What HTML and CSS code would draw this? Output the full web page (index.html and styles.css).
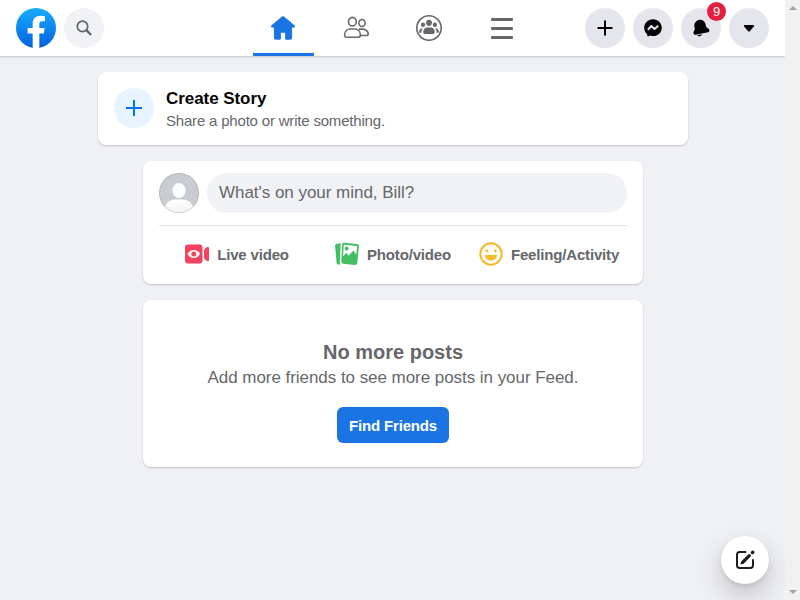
FILE: index.html
```html
<!DOCTYPE html>
<html lang="en">
<head>
<meta charset="utf-8">
<title>Facebook</title>
<link rel="stylesheet" href="styles.css">
</head>
<body>
<div class="page">
  <header class="topbar">
    <a class="logo" href="#" aria-label="Facebook">
      <svg width="40" height="40" viewBox="0 0 36 36">
        <defs><linearGradient id="logoFill" x1="0" y1="0" x2="0" y2="1"><stop offset="0" stop-color="#18acfe"/><stop offset="1" stop-color="#0062e0"/></linearGradient></defs>
        <circle cx="18" cy="18" r="18" fill="url(#logoFill)"/>
        <path fill="#fff" d="M25 23l.8-5H21v-3.500c0-1.400.5-2.500 2.700-2.500H26V7.400c-1.300-.2-2.700-.4-4-.4-4.100 0-7 2.500-7 7v4h-4.500v5H15v12.700c1 .2 2 .3 3 .3s2-.1 3-.3V23h4z"/>
      </svg>
    </a>
    <button class="round search" aria-label="Search">
      <svg width="40" height="40" viewBox="0 0 40 40" fill="none" stroke="#606267" stroke-linecap="round"><circle cx="18.500" cy="18.400" r="5.200" stroke-width="1.700"/><path d="M22.600 22.400l3.900 3.800" stroke-width="2.300"/></svg>
    </button>
    <nav class="tabs">
      <a class="tab active" href="#" aria-label="Home">
        <svg width="29" height="28" viewBox="0 0 29 28"><path fill="#1b74e4" stroke="#1b74e4" stroke-width="1" stroke-linejoin="round" d="M12.800 3.200Q14 2.100 15.200 3.200L25.400 11.700Q26.400 13.100 25 13.100H22.600V24Q22.600 25.200 21.400 25.200H16.700V19Q16.700 18.200 15.900 18.200H12.100Q11.300 18.200 11.300 19V25.200H6.600Q5.400 25.200 5.400 24V13.100H3Q1.600 13.100 2.600 11.700Z"/></svg>
      </a>
      <a class="tab" href="#" aria-label="Friends">
        <svg width="29" height="28" viewBox="0 0 29 28" fill="none" stroke="#65676b" stroke-width="1.600"><ellipse cx="10.400" cy="7.700" rx="3.900" ry="4.300"/><ellipse cx="20" cy="9" rx="3.100" ry="3.500"/><path d="M8.500 15h4c3.600 0 5.900 2.500 5.900 6 0 1.700-.7 2.200-2.200 2.200H4.800c-1.500 0-2.200-.5-2.200-2.200 0-3.500 2.300-6 5.900-6z"/><path d="M16.800 15.100h3.700c3.500 0 5.700 2.300 5.700 4.600 0 1.300-.6 1.800-2 1.800h-5.400"/></svg>
      </a>
      <a class="tab" href="#" aria-label="Groups">
        <svg width="29" height="28" viewBox="0 0 29 28" fill="#65676b"><circle cx="14" cy="14" r="12.200" fill="none" stroke="#65676b" stroke-width="1.600"/><ellipse cx="14" cy="8.800" rx="2.900" ry="3.100"/><ellipse cx="8.100" cy="10.800" rx="2.100" ry="2.300"/><ellipse cx="19.900" cy="10.800" rx="2.100" ry="2.300"/><path d="M12.500 13.500h3c2.600 0 4.300 1.900 4.300 4.600 0 1.200-.6 1.800-1.700 1.800H9.900c-1.100 0-1.700-.6-1.700-1.800 0-2.700 1.700-4.600 4.300-4.600z"/><path d="M8 14.300c-1.300 1.400-1.700 3-1.600 4.500H5c-.7 0-.9-.5-.9-1 0-2 1.700-3.700 3.900-3.500zM20 14.300c1.300 1.400 1.700 3 1.600 4.500H23c.7 0 .9-.5.9-1 0-2-1.700-3.700-3.900-3.500z"/></svg>
      </a>
      <a class="tab" href="#" aria-label="More">
        <svg width="29" height="28" viewBox="0 0 29 28" fill="#65676b"><rect x="3" y="4" width="22" height="3" rx="1"/><rect x="3" y="13" width="22" height="3" rx="1"/><rect x="3" y="22" width="22" height="3" rx="1"/></svg>
      </a>
    </nav>
    <div class="tools">
      <button class="round" aria-label="Create"><svg width="40" height="40" viewBox="0 0 40 40" fill="none" stroke="#000" stroke-width="2" stroke-linecap="round"><path d="M20 13.300v13.400M13.300 20h13.400"/></svg></button>
      <button class="round" aria-label="Messenger"><svg width="40" height="40" viewBox="0 0 40 40"><path fill="#050505" d="M20 11.200c-5 0-8.800 3.600-8.800 8.500 0 2.500 1 4.700 2.800 6.200.3.300.3.800.3 1.600 0 .7.600 1.100 1.200.8l1.700-.8c.9.400 1.800.5 2.800.5 5 0 8.800-3.600 8.800-8.300s-3.800-8.500-8.800-8.500z"/><path fill="none" stroke="#e4e6eb" stroke-width="2" stroke-linejoin="round" d="M14.900 21.800l3.400-3.800 3.200 2.900 3.700-3.200"/></svg></button>
      <button class="round" aria-label="Notifications"><svg width="40" height="40" viewBox="0 0 40 40"><g fill="#050505" transform="rotate(-11 20 20)"><path d="M19.700 11.700c-3.300 0-5.800 2.400-5.900 5.600v2c0 1-.7 1.700-1.500 2.600-1.200 1.400-.9 3.700 1 3.700h12.800c1.900 0 2.200-2.300 1-3.700-.9-1-1.900-1.600-1.900-2.700v-1.900c-.1-3.200-2.200-5.600-5.500-5.600z"/><path d="M14.600 26.300h5c-.2 1-1.100 1.500-2.200 1.500s-2.300-.5-2.800-1.500z"/></g></svg><span class="badge">9</span></button>
      <button class="round" aria-label="Account"><svg width="40" height="40" viewBox="0 0 40 40"><path fill="#050505" d="M15.600 17h8.800c.7 0 1 .8.500 1.400l-4.100 4.900c-.5.500-1.100.5-1.600 0l-4.100-4.900c-.5-.6-.2-1.400.5-1.400z"/></svg></button>
    </div>
  </header>
  <main class="feed">
    <section class="card story">
      <span class="story-icon"><svg width="40" height="40" viewBox="0 0 40 40" fill="none" stroke="#0571ed" stroke-width="2"><path d="M20 12v16M12 20h16"/></svg></span>
      <div>
        <h2 class="story-title">Create Story</h2>
        <p class="story-text">Share a photo or write something.</p>
      </div>
    </section>
    <section class="card composer">
      <div class="prompt">
        <svg class="avatar" width="40" height="40" viewBox="0 0 40 40">
          <defs><clipPath id="face"><circle cx="20" cy="20" r="20"/></clipPath><linearGradient id="shirt" x1="0" y1="0" x2="0" y2="1"><stop offset="0" stop-color="#fff"/><stop offset="1" stop-color="#f2f2f4"/></linearGradient></defs>
          <g clip-path="url(#face)"><path fill="#c9ccd1" d="M0 0h40v40H0z"/><ellipse cx="20" cy="17.500" rx="6.600" ry="7.500" fill="#fff"/><path fill="url(#shirt)" d="M5 40c0-8 4-13 11-13.400h8c7 .4 11 5.400 11 13.400z"/></g>
          <circle cx="20" cy="20" r="19.500" fill="none" stroke="#000" stroke-opacity=".11"/>
        </svg>
        <div class="input">What's on your mind, Bill?</div>
      </div>
      <div class="actions">
        <div class="action"><svg width="24" height="24" viewBox="0 0 24 24"><rect y="2.500" width="17.500" height="19" rx="3" fill="#f3425f"/><path fill="#f3425f" d="M19 9c0-2 1.500-3.500 3.500-4 1-.2 1.500.2 1.500 1v12c0 .8-.5 1.200-1.500 1-2-.5-3.500-2-3.500-4z"/><path fill="#fff" d="M2.500 12C4 9.200 6.200 7.900 8.800 7.900s4.800 1.300 6.300 4.100c-1.500 2.800-3.700 4.100-6.300 4.100S4 14.800 2.500 12z"/><circle cx="8.800" cy="12" r="2.500" fill="#f3425f"/></svg>Live video</div>
        <div class="action"><svg width="24" height="24" viewBox="0 0 24 24"><path fill="#45bd62" d="M5.700 1.300L2 1.700C.7 1.900 0 2.700.1 4l1.500 16.700c.2 1.500 1.200 2.100 2.500 1.900l1.300-.2c-.5-.6-.7-1.300-.6-2.200z"/><path fill="#45bd62" fill-rule="evenodd" d="M9.400.8l12.300 1.300c1.500.2 2.300 1.100 2.200 2.500L22.300 20.800c-.2 1.500-1.100 2.300-2.500 2.200L8.400 21.800c-1.500-.2-2.200-1.100-2.100-2.500L7.100 2.900C7.200 1.300 8 .7 9.400.8zM9.500 2.700c-.5 0-.8.2-.8.7l-.6 10.800 2.300-2.500c.5-.5 1.100-.5 1.600.1l1.600 1.900 3.800-4.300c.6-.6 1.200-.6 1.700.1l2.200 3.100.8-7.500c0-.6-.2-.9-.8-1z"/><circle cx="11.700" cy="6.500" r="1.900" fill="#45bd62"/></svg>Photo/video</div>
        <div class="action"><svg width="24" height="24" viewBox="0 0 24 24"><circle cx="12" cy="12" r="10.700" fill="none" stroke="#f7b928" stroke-width="2"/><circle cx="7.700" cy="8.900" r="1.400" fill="#f7b928"/><circle cx="16.300" cy="8.900" r="1.400" fill="#f7b928"/><path fill="#f7b928" d="M6.900 13h10.200c.7 0 1 .5.900 1.100-.5 2.700-3 4.500-6 4.500s-5.500-1.800-6-4.500c-.1-.6.2-1.100.9-1.100z"/></svg>Feeling/Activity</div>
      </div>
    </section>
    <section class="card empty">
      <h2 class="empty-title">No more posts</h2>
      <p class="empty-text">Add more friends to see more posts in your Feed.</p>
      <button class="primary">Find Friends</button>
    </section>
  </main>
  <button class="compose" aria-label="New message"><svg width="24" height="24" viewBox="0 0 24 24" fill="none" stroke="#1c1e21" stroke-linecap="round"><path stroke-width="2" d="M12.500 4H6.800Q4 4 4 6.800v10.400Q4 20 6.800 20h10.400q2.800 0 2.800-2.800V12"/><path stroke-width="3.200" d="M10 14l6.300-6.300"/><path stroke-width="3.400" d="M19.400 4.600l.4-.4"/><path fill="#1c1e21" stroke="none" d="M8.400 13l2.600 2.600-3.400 1c-.2 0-.3-.1-.2-.3z"/></svg></button>
</div>
<div class="scrollbar"><span class="arrow-up"></span><span class="arrow-down"></span></div>
</body>
</html>
```

FILE: styles.css
```css
* { box-sizing: border-box; }
html, body { margin: 0; height: 100%; overflow: hidden; }
body {
  display: flex;
  background: #f0f2f5;
  color: #65676b;
  font-family: "Liberation Sans", Arial, sans-serif;
}
h2, p { margin: 0; }
button { font: inherit; border: 0; padding: 0; }
svg { display: block; flex: none; }
.page { position: relative; flex: 1; height: 600px; background: #f0f1f5; }

.topbar {
  display: flex;
  align-items: center;
  height: 56px;
  padding: 0 16px;
  background: #fff;
  box-shadow: 0 1px 2px rgba(0, 0, 0, .18);
}
.round {
  position: relative;
  width: 40px;
  height: 40px;
  border-radius: 50%;
  background: #e4e6eb;
}
.search { margin-left: 8px; background: #f0f2f5; }
.tabs { display: flex; gap: 12px; margin-left: 149px; }
.tab {
  display: flex;
  justify-content: center;
  align-items: center;
  width: 61px;
  height: 56px;
}
.tab.active { box-shadow: inset 0 -3px #1b74e4; border-radius: 1px; }
.tools { display: flex; gap: 8px; margin-left: auto; }
.badge {
  position: absolute;
  top: -6px;
  right: -5px;
  width: 19px;
  height: 19px;
  border-radius: 50%;
  background: #e41e3f;
  color: #fff;
  font-size: 13px;
  line-height: 19px;
  text-align: center;
}

.feed {
  display: flex;
  flex-direction: column;
  align-items: center;
  gap: 16px;
  padding: 16px 0 0 1px;
}
.card {
  width: 500px;
  border-radius: 8px;
  background: #fff;
  box-shadow: 0 1px 2px rgba(0, 0, 0, .2);
}
.story { display: flex; gap: 12px; width: 590px; height: 73px; padding: 16px; }
.story-icon { width: 40px; height: 40px; border-radius: 50%; background: #e7f3ff; }
.story-title { padding-top: 1px; font-size: 17px; line-height: 20px; letter-spacing: -.06px; color: #050505; }
.story-text { margin-top: 2px; font-size: 15px; line-height: 20px; letter-spacing: -.19px; }

.composer { height: 123px; padding: 12px 16px; }
.prompt { display: flex; gap: 8px; padding-bottom: 12px; border-bottom: 1px solid #e2e4e8; }
.input {
  flex: 1;
  height: 40px;
  padding-left: 12px;
  border-radius: 20px;
  background: #f0f2f5;
  font-size: 17px;
  line-height: 39px;
  letter-spacing: -.03px;
}
.actions { display: grid; grid-template-columns: repeat(3, 1fr); padding-top: 8px; }
.action {
  display: flex;
  align-items: center;
  justify-content: center;
  gap: 8px;
  height: 40px;
  font-size: 15px;
  font-weight: bold;
  letter-spacing: -.17px;
}

.empty {
  display: flex;
  flex-direction: column;
  align-items: center;
  height: 167px;
  padding-top: 40px;
}
.empty-title { font-size: 20px; line-height: 24px; }
.empty-text { margin-top: 4px; font-size: 17px; line-height: 20px; letter-spacing: -.05px; }
.primary {
  width: 112px;
  height: 36px;
  margin-top: 19px;
  border-radius: 6px;
  background: #1b74e4;
  color: #fff;
  font-size: 15px;
  font-weight: bold;
  letter-spacing: -.17px;
}

.compose {
  position: absolute;
  right: 16px;
  bottom: 16px;
  display: flex;
  align-items: center;
  justify-content: center;
  width: 48px;
  height: 48px;
  border-radius: 50%;
  background: #fff;
  box-shadow: 0 2px 4px rgba(0, 0, 0, .1), 0 12px 28px rgba(0, 0, 0, .2);
}

.scrollbar {
  z-index: 1;
  display: flex;
  flex-direction: column;
  justify-content: space-between;
  align-items: center;
  width: 15px;
  padding: 6px 0;
  background: #f1f1f1;
}
.arrow-up, .arrow-down { border: 4px solid transparent; }
.arrow-up { border-top: 0; border-bottom-color: #a3a3a3; }
.arrow-down { border-bottom: 0; border-top-color: #a3a3a3; }
```
